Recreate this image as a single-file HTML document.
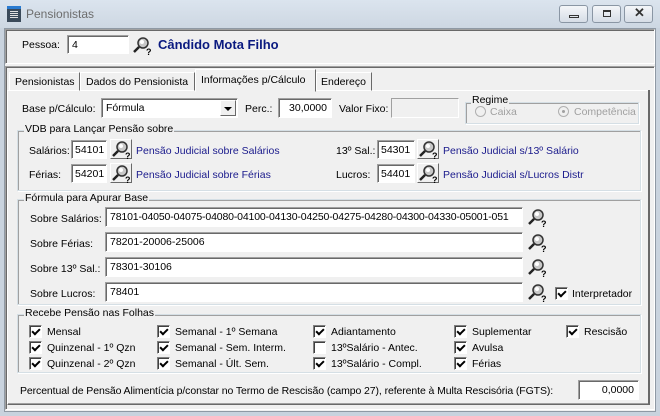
<!DOCTYPE html>
<html><head><meta charset="utf-8"><style>
*{box-sizing:border-box;margin:0;padding:0}
body{width:660px;height:416px;overflow:hidden;background:#c9d3de;font-family:"Liberation Sans",Arial,sans-serif;font-size:10.5px;color:#000;position:relative}
.a{position:absolute;white-space:nowrap}
.in{position:absolute;background:#fff;border:1px solid;border-color:#a0a0a0 #fff #fff #a0a0a0;box-shadow:inset 1px 1px 0 #696969;padding:3px 0 0 4px;white-space:nowrap;overflow:hidden}
.grp{position:absolute;border:1px solid #d5dfe5;box-shadow:inset 1px 1px 0 #a0a0a0, 1px 1px 0 #fff}
.grp>span{position:absolute;top:-8px;left:6px;background:#f0f0f0;padding:0 1px}
.cb{position:absolute;width:13px;height:13px;background:#fff;border:1px solid;border-color:#808080 #fff #fff #808080;box-shadow:inset 1px 1px 0 #404040}
.cb.c::after{content:"";position:absolute;left:2px;top:1px;width:6px;height:3px;border-left:2px solid #000;border-bottom:2px solid #000;transform:rotate(-45deg) translate(-1px,1px)}
.blue{color:#1a1a8c}
.btn{position:absolute;width:22px;height:20px;border:1px solid;border-color:#fff #696969 #696969 #fff;background:#f0f0f0}
.wb{position:absolute;top:5px;width:29px;height:18px;border:1px solid #8a96a4;border-radius:3px;background:linear-gradient(#f4f6f9,#d6dde6)}
</style></head><body>
<svg width="0" height="0" style="position:absolute"><defs>
<g id="mg"><circle cx="10" cy="7" r="5" fill="#c8c8c8" stroke="#333" stroke-width="1.5"/><circle cx="9" cy="6" r="2" fill="#fff"/><path d="M6 11 L1 16" stroke="#222" stroke-width="2.5"/><text x="13" y="19" font-size="9" font-family="Liberation Sans" font-weight="bold" fill="#000">?</text></g>
</defs></svg>
<div class="a" style="left:0;top:0;width:660px;height:28px;background:linear-gradient(#dbe4ee,#cdd7e2)"></div>
<div class="a" style="left:7px;top:6px;width:14px;height:16px;background:#3b4a5a;border-top:3px solid #2a7bd0"></div>
<div class="a" style="left:10px;top:11px;width:8px;height:8px;background:repeating-linear-gradient(#e0e0e0 0 1px,#3b4a5a 1px 2px)"></div>
<div class="a" style="left:26px;top:7px;font-size:12px;color:#6d6d6d">Pensionistas</div>
<div class="wb" style="left:559px"><div class="a" style="left:9px;top:9px;width:10px;height:3px;border:1px solid #333"></div></div>
<div class="wb" style="left:592px"><div class="a" style="left:10px;top:4px;width:8px;height:7px;border:1px solid #333;border-top-width:2px"></div></div>
<div class="wb" style="left:624px"><div class="a" style="left:9px;top:-1px;font-size:13px;font-weight:bold;color:#333">✕</div></div>
<div class="a" style="left:4px;top:28px;width:652px;height:384px;background:#f0f0f0;border:1px solid #8f99a4"></div>
<div class="a" style="left:5px;top:29px;width:650px;height:35px;border:1px solid;border-color:#a0a0a0 #fff #fff #a0a0a0;box-shadow:inset 1px 1px 0 #696969"></div>
<div class="a" style="left:22px;top:39px">Pessoa:</div>
<div class="in" style="left:67px;top:35px;width:62px;height:19px">4</div>
<svg class="a" style="left:133px;top:36px" width="20" height="20"><use href="#mg"/></svg>
<div class="a" style="left:158px;top:37px;font-size:13px;font-weight:bold;color:#0a1a80">Cândido Mota Filho</div>
<div class="a" style="left:5px;top:66px;width:650px;height:344px;border:1px solid;border-color:#a0a0a0 #fff #fff #a0a0a0;box-shadow:inset 1px 1px 0 #696969"></div>
<div class="a" style="left:7px;top:90px;width:643px;height:315px;border:1px solid;border-color:#fff #696969 #696969 #fff;box-shadow:inset -1px -1px 0 #a0a0a0"></div>
<div class="a" style="left:648px;top:90px;width:2px;height:315px;background:#696969"></div>
<div class="a" style="left:9px;top:72px;width:71px;height:19px;border:1px solid;border-color:#fff #696969 transparent #fff;padding:3px 0 0 5px">Pensionistas</div>
<div class="a" style="left:80px;top:72px;width:115px;height:19px;border:1px solid;border-color:#fff #696969 transparent #fff;padding:3px 0 0 5px">Dados do Pensionista</div>
<div class="a" style="left:195px;top:69px;width:121px;height:23px;border:1px solid;border-color:#fff #696969 transparent #fff;background:#f0f0f0;padding:4px 0 0 5px">Informações p/Cálculo</div>
<div class="a" style="left:316px;top:72px;width:56px;height:19px;border:1px solid;border-color:#fff #696969 transparent #fff;padding:3px 0 0 4px">Endereço</div>
<div class="a" style="left:22px;top:103px">Base p/Cálculo:</div>
<div class="in" style="left:101px;top:98px;width:137px;height:20px">Fórmula</div>
<div class="a" style="left:220px;top:100px;width:16px;height:16px;border:1px solid;border-color:#fff #696969 #696969 #fff;background:#f0f0f0"><div class="a" style="left:3px;top:6px;border:4px solid transparent;border-top:4px solid #000;border-bottom:0"></div></div>
<div class="a" style="left:245px;top:103px">Perc.:</div>
<div class="in" style="left:278px;top:98px;width:54px;height:20px;text-align:right;padding-right:4px">30,0000</div>
<div class="a" style="left:339px;top:103px">Valor Fixo:</div>
<div class="in" style="left:391px;top:98px;width:68px;height:20px;background:#f0f0f0;box-shadow:none"></div>
<div class="grp" style="left:465px;top:102px;width:174px;height:22px"><span style="top:-9px;left:5px">Regime</span></div>
<div class="a" style="left:475px;top:106px;width:11px;height:11px;border-radius:50%;border:1px solid #b0b0b0;background:#f0f0f0"></div>
<div class="a" style="left:490px;top:106px;color:#a0a0a0">Caixa</div>
<div class="a" style="left:558px;top:106px;width:11px;height:11px;border-radius:50%;border:1px solid #b0b0b0;background:#f0f0f0"><div class="a" style="left:3px;top:3px;width:3px;height:3px;border-radius:50%;background:#a0a0a0"></div></div>
<div class="a" style="left:574px;top:106px;color:#a0a0a0">Competência</div>
<div class="grp" style="left:17px;top:130px;width:624px;height:61px"><span>VDB para Lançar Pensão sobre</span></div>
<div class="a" style="left:29px;top:145px">Salários:</div>
<div class="in" style="left:71px;top:140px;width:36px;height:19px;padding-left:3px">54101</div>
<div class="btn" style="left:110px;top:139px"><svg class="a" style="left:1px;top:0" width="20" height="20"><use href="#mg"/></svg></div>
<div class="a blue" style="left:136px;top:145px">Pensão Judicial sobre Salários</div>
<div class="a" style="left:29px;top:169px">Férias:</div>
<div class="in" style="left:71px;top:164px;width:36px;height:19px;padding-left:3px">54201</div>
<div class="btn" style="left:110px;top:163px"><svg class="a" style="left:1px;top:0" width="20" height="20"><use href="#mg"/></svg></div>
<div class="a blue" style="left:136px;top:169px">Pensão Judicial sobre Férias</div>
<div class="a" style="left:336px;top:145px">13º Sal.:</div>
<div class="in" style="left:377px;top:140px;width:38px;height:19px;padding-left:3px">54301</div>
<div class="btn" style="left:417px;top:139px"><svg class="a" style="left:1px;top:0" width="20" height="20"><use href="#mg"/></svg></div>
<div class="a blue" style="left:443px;top:145px">Pensão Judicial s/13º Salário</div>
<div class="a" style="left:336px;top:169px">Lucros:</div>
<div class="in" style="left:377px;top:164px;width:38px;height:19px;padding-left:3px">54401</div>
<div class="btn" style="left:417px;top:163px"><svg class="a" style="left:1px;top:0" width="20" height="20"><use href="#mg"/></svg></div>
<div class="a blue" style="left:443px;top:169px">Pensão Judicial s/Lucros Distr</div>
<div class="grp" style="left:17px;top:199px;width:624px;height:106px"><span>Fórmula para Apurar Base</span></div>
<div class="a" style="left:30px;top:213px">Sobre Salários:</div>
<div class="in" style="left:105px;top:207px;width:418px;height:20px;letter-spacing:-0.15px">78101-04050-04075-04080-04100-04130-04250-04275-04280-04300-04330-05001-051</div>
<svg class="a" style="left:528px;top:208px" width="20" height="20"><use href="#mg"/></svg>
<div class="a" style="left:30px;top:238px">Sobre Férias:</div>
<div class="in" style="left:105px;top:232px;width:418px;height:20px">78201-20006-25006</div>
<svg class="a" style="left:528px;top:233px" width="20" height="20"><use href="#mg"/></svg>
<div class="a" style="left:30px;top:263px">Sobre 13º Sal.:</div>
<div class="in" style="left:105px;top:257px;width:418px;height:20px">78301-30106</div>
<svg class="a" style="left:528px;top:258px" width="20" height="20"><use href="#mg"/></svg>
<div class="a" style="left:30px;top:288px">Sobre Lucros:</div>
<div class="in" style="left:105px;top:282px;width:418px;height:20px">78401</div>
<svg class="a" style="left:528px;top:283px" width="20" height="20"><use href="#mg"/></svg>
<div class="cb c" style="left:555px;top:287px"></div>
<div class="a" style="left:572px;top:288px">Interpretador</div>
<div class="grp" style="left:17px;top:314px;width:624px;height:59px"><span>Recebe Pensão nas Folhas</span></div>
<div class="cb c" style="left:29px;top:325px"></div><div class="a" style="left:47px;top:326px">Mensal</div>
<div class="cb c" style="left:29px;top:341px"></div><div class="a" style="left:47px;top:342px">Quinzenal - 1º Qzn</div>
<div class="cb c" style="left:29px;top:357px"></div><div class="a" style="left:47px;top:358px">Quinzenal - 2º Qzn</div>
<div class="cb c" style="left:157px;top:325px"></div><div class="a" style="left:175px;top:326px">Semanal - 1º Semana</div>
<div class="cb c" style="left:157px;top:341px"></div><div class="a" style="left:175px;top:342px">Semanal - Sem. Interm.</div>
<div class="cb c" style="left:157px;top:357px"></div><div class="a" style="left:175px;top:358px">Semanal - Últ. Sem.</div>
<div class="cb c" style="left:313px;top:325px"></div><div class="a" style="left:331px;top:326px">Adiantamento</div>
<div class="cb" style="left:313px;top:341px"></div><div class="a" style="left:331px;top:342px">13ºSalário - Antec.</div>
<div class="cb c" style="left:313px;top:357px"></div><div class="a" style="left:331px;top:358px">13ºSalário - Compl.</div>
<div class="cb c" style="left:454px;top:325px"></div><div class="a" style="left:472px;top:326px">Suplementar</div>
<div class="cb c" style="left:454px;top:341px"></div><div class="a" style="left:472px;top:342px">Avulsa</div>
<div class="cb c" style="left:454px;top:357px"></div><div class="a" style="left:472px;top:358px">Férias</div>
<div class="cb c" style="left:566px;top:325px"></div><div class="a" style="left:584px;top:326px">Rescisão</div>
<div class="a" style="left:20px;top:385px;letter-spacing:-0.1px">Percentual de Pensão Alimentícia p/constar no Termo de Rescisão (campo 27), referente à Multa Rescisória (FGTS):</div>
<div class="in" style="left:578px;top:380px;width:61px;height:20px;text-align:right;padding-right:4px">0,0000</div>
</body></html>
